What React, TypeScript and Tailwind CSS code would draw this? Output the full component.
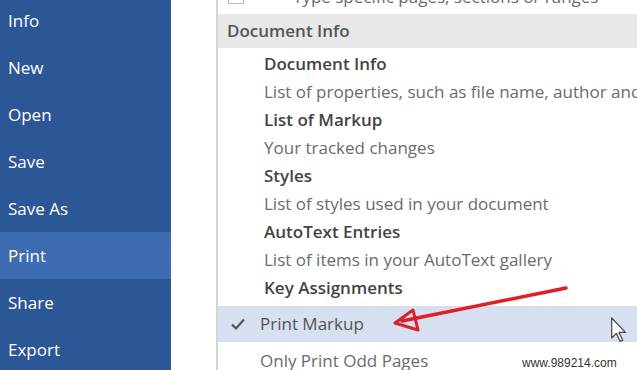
const navItems = ["Info", "New", "Open", "Save", "Save As", "Print", "Share", "Export"];

const entries = [
  { title: "Document Info", desc: "List of properties, such as file name, author and" },
  { title: "List of Markup", desc: "Your tracked changes" },
  { title: "Styles", desc: "List of styles used in your document" },
  { title: "AutoText Entries", desc: "List of items in your AutoText gallery" },
];

const font = { fontFamily: '"Open Sans", "Noto Sans", Arial, sans-serif' };

export default function App() {
  return (
    <div className="relative flex w-[637px] h-[370px] overflow-hidden bg-white" style={font}>
      {/* Backstage nav */}
      <div className="w-[171px] shrink-0 bg-[#2b5797] flex flex-col mt-[-3px]">
        {navItems.map((item) => (
          <div
            key={item}
            className={`h-[47px] shrink-0 flex items-center pl-2 text-[17px] text-white ${
              item === "Print" ? "bg-[#3d6cb3]" : ""
            }`}
          >
            {item}
          </div>
        ))}
      </div>

      {/* gap */}
      <div className="w-[45px] shrink-0 bg-white" />

      {/* dropdown menu */}
      <div className="flex-1 min-w-0 border-l-2 border-[#d4d4d4] bg-white flex flex-col mt-[-20px] whitespace-nowrap">
        <div className="h-[34px] shrink-0 flex items-center pl-[75px] text-[17px] text-[#6a6a6a] relative">
          <div className="absolute left-[10px] top-[6px] w-[16px] h-[18px] border border-[#b8b8b8]" />
          Type specific pages, sections or ranges
        </div>
        <div className="h-[34px] shrink-0 flex items-center pl-[9px] bg-[#e8e8e8] text-[17px] font-semibold text-[#555]">
          Document Info
        </div>
        <div className="pt-[2px] pl-[46px]">
          {entries.map((e) => (
            <div key={e.title}>
              <div className="h-[28px] flex items-center text-[17px] font-semibold text-[#444]">{e.title}</div>
              <div className="h-[28px] flex items-center text-[17px] text-[#6b6b6b]">{e.desc}</div>
            </div>
          ))}
          <div className="h-[28px] flex items-center text-[17px] font-semibold text-[#444]">Key Assignments</div>
        </div>
        <div className="mt-[4px] h-px bg-[#d0d0d0] ml-[4px]" />
        <div className="h-[36px] shrink-0 flex items-center bg-[#d6e0f0] pl-[12px] text-[17px] text-[#555]">
          <svg width="16" height="14" viewBox="0 0 16 14" className="mr-[14px]">
            <path d="M2 7.5 L6 11.5 L14 2.5" fill="none" stroke="#555" strokeWidth="2.2" />
          </svg>
          Print Markup
        </div>
        <div className="h-[38px] shrink-0 flex items-center pl-[42px] text-[17px] text-[#6b6b6b]">Only Print Odd Pages</div>
      </div>

      {/* watermark */}
      <div
        className="absolute left-[522px] top-[354px] text-[12px] text-[#333]"
        style={{ fontFamily: '"Liberation Sans", Arial, sans-serif' }}
      >
        www.989214.com
      </div>

      {/* red annotation arrow */}
      <svg className="absolute left-0 top-0" width="637" height="370" viewBox="0 0 637 370">
        <path d="M566 288 L402 321" stroke="#e01e25" strokeWidth="3.5" fill="none" strokeLinecap="round" />
        <path d="M395 323 L413 310 L418 330 Z" stroke="#e01e25" strokeWidth="3" fill="none" strokeLinejoin="round" />
      </svg>

      {/* mouse pointer */}
      <svg className="absolute left-[611px] top-[317px]" width="16" height="26" viewBox="0 0 12 19">
        <path d="M0.5 0.5 L0.5 15.5 L4 12 L6.8 18 L8.8 17.2 L6 11.3 L10.8 11.3 Z" fill="#fff" stroke="#444" strokeWidth="0.9" strokeLinejoin="round" />
      </svg>
    </div>
  );
}
